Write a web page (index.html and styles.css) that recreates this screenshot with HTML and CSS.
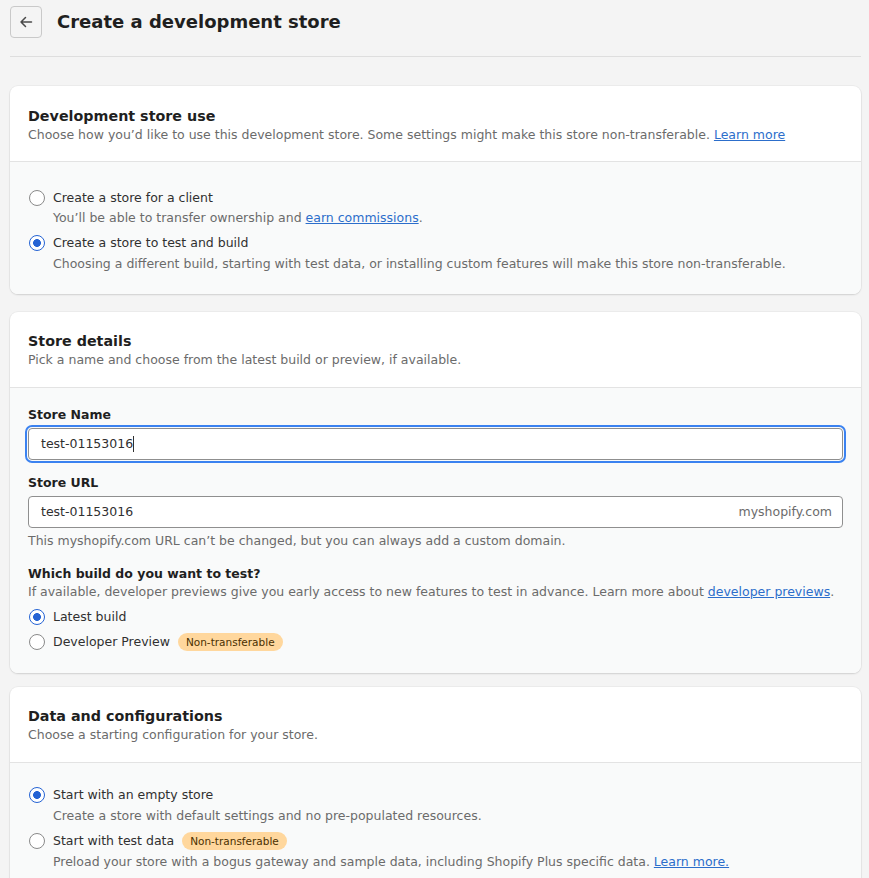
FILE: index.html
```html
<!DOCTYPE html>
<html lang="en">
<head>
<meta charset="utf-8">
<title>Create a development store</title>
<link rel="stylesheet" href="styles.css">
</head>
<body>
<div class="page">
  <header class="page-header">
    <button class="back-btn" aria-label="Back">
      <svg width="16" height="16" viewBox="0 0 16 16"><path d="M13.5 8H3M7.5 3.5L3 8l4.5 4.5" fill="none" stroke="#4a4a4a" stroke-width="1.5" stroke-linecap="round" stroke-linejoin="round"/></svg>
    </button>
    <h1 class="page-title">Create a development store</h1>
  </header>
  <hr class="divider">

  <section class="card card-use">
    <div class="card-head">
      <h2 class="card-title">Development store use</h2>
      <p class="card-sub">Choose how you’d like to use this development store. Some settings might make this store non-transferable. <a href="#">Learn more</a></p>
    </div>
    <div class="card-body body-radios b1">
      <label class="radio-row">
        <span class="radio"></span>
        <span class="radio-label">Create a store for a client</span>
      </label>
      <p class="radio-help">You’ll be able to transfer ownership and <a href="#">earn commissions</a>.</p>
      <label class="radio-row">
        <span class="radio checked"></span>
        <span class="radio-label">Create a store to test and build</span>
      </label>
      <p class="radio-help">Choosing a different build, starting with test data, or installing custom features will make this store non-transferable.</p>
    </div>
  </section>

  <section class="card card-details">
    <div class="card-head">
      <h2 class="card-title">Store details</h2>
      <p class="card-sub">Pick a name and choose from the latest build or preview, if available.</p>
    </div>
    <div class="card-body body-form">
      <div class="field">
        <div class="field-label">Store Name</div>
        <div class="input focused"><span class="input-text">test-01153016</span><span class="caret"></span></div>
      </div>
      <div class="field">
        <div class="field-label">Store URL</div>
        <div class="input"><span class="input-text">test-01153016</span><span class="suffix">myshopify.com</span></div>
        <p class="field-help">This myshopify.com URL can’t be changed, but you can always add a custom domain.</p>
      </div>
      <div class="field build">
        <div class="field-label">Which build do you want to test?</div>
        <p class="field-help top">If available, developer previews give you early access to new features to test in advance. Learn more about <a href="#">developer previews</a>.</p>
        <label class="radio-row compact">
          <span class="radio checked"></span>
          <span class="radio-label">Latest build</span>
        </label>
        <label class="radio-row compact">
          <span class="radio"></span>
          <span class="radio-label">Developer Preview</span>
          <span class="badge">Non-transferable</span>
        </label>
      </div>
    </div>
  </section>

  <section class="card card-data">
    <div class="card-head">
      <h2 class="card-title">Data and configurations</h2>
      <p class="card-sub">Choose a starting configuration for your store.</p>
    </div>
    <div class="card-body body-radios b3">
      <label class="radio-row">
        <span class="radio checked"></span>
        <span class="radio-label">Start with an empty store</span>
      </label>
      <p class="radio-help">Create a store with default settings and no pre-populated resources.</p>
      <label class="radio-row">
        <span class="radio"></span>
        <span class="radio-label">Start with test data</span>
        <span class="badge">Non-transferable</span>
      </label>
      <p class="radio-help">Preload your store with a bogus gateway and sample data, including Shopify Plus specific data. <a href="#">Learn more.</a></p>
    </div>
  </section>
</div>
</body>
</html>
```

FILE: styles.css
```css
* { box-sizing: border-box; }
html, body { margin: 0; padding: 0; }
body {
  background: #f4f4f4;
  font-family: "DejaVu Sans", sans-serif;
  color: #303030;
  font-size: 12.5px;
}
.page {
  padding: 6px 8px 0 10px;
}
.page-header {
  display: flex;
  align-items: center;
  gap: 15px;
  height: 32px;
}
.back-btn {
  width: 32px;
  height: 32px;
  border: 1px solid #c9c9c9;
  border-radius: 4px;
  background: #f4f4f4;
  display: flex;
  align-items: center;
  justify-content: center;
  padding: 0;
}
.page-title {
  margin: 0;
  font-size: 18px;
  font-weight: bold;
  color: #1f1f1f;
  line-height: 24px;
  margin-top: -1px;
}
.divider {
  border: 0;
  border-top: 1px solid #dedede;
  margin: 18px 0 29px 0;
}
.card {
  background: #fff;
  border-radius: 8px;
  box-shadow: 0 1px 2px rgba(0,0,0,0.12), 0 0 0 1px rgba(0,0,0,0.03);
  overflow: hidden;
}
.card-use { margin-bottom: 18px; }
.card-details { margin-bottom: 14px; }
.card-head {
  padding: 19px 18px 18px 18px;
  border-bottom: 1px solid #e3e3e3;
}
.card-use .card-head { padding-top: 20px; padding-bottom: 17px; }
.card-title {
  margin: 0;
  font-size: 14.3px;
  font-weight: bold;
  line-height: 20px;
  color: #1f1f1f;
}
.card-sub {
  margin: 0;
  line-height: 18px;
  color: #6b6b6b;
}
a { color: #2c6ecb; text-decoration: underline; }
.card-body {
  background: #f9fafa;
  padding: 0 18px;
}
.body-radios { padding-top: 26px; padding-bottom: 21px; }
.b3 { padding-top: 22px; }
.radio-row {
  display: flex;
  align-items: center;
  gap: 8px;
  line-height: 20px;
  height: 20px;
}
.radio {
  width: 16px;
  height: 16px;
  margin-left: 1px;
  border-radius: 50%;
  border: 1px solid #8a8a8a;
  background: #fff;
  flex: none;
}
.radio.checked {
  border: 1.5px solid #2563d4;
  background: radial-gradient(circle, #2563d4 0 3.6px, #fff 4.2px);
}
.radio-label { color: #303030; }
.radio-help {
  margin: 1px 0 6px 25px;
  line-height: 18px;
  color: #6b6b6b;
}
.radio-help:last-child { margin-bottom: 0; margin-top: 2px; }
.b3 .radio-help { margin-top: 2px; margin-bottom: 6px; }
.b3 .radio-help:last-child { margin-bottom: 0; }
.badge {
  display: inline-block;
  background: #ffd79d;
  color: #4a3000;
  border-radius: 9px;
  font-size: 10.5px;
  line-height: 18px;
  padding: 0 8px;
}
.body-form { padding-top: 17px; padding-bottom: 21px; }
.field + .field { margin-top: 13px; }
.field-label {
  font-weight: bold;
  line-height: 20px;
  color: #1f1f1f;
  margin-bottom: 3px;
}
.input {
  height: 32px;
  background: #fff;
  border: 1px solid #8f8f8f;
  border-radius: 4px;
  display: flex;
  align-items: center;
  padding: 0 10px 0 12px;
  line-height: 20px;
}
.input.focused {
  outline: 2px solid #3b82f0;
  outline-offset: 1px;
}
.input-text { color: #303030; }
.caret {
  width: 1px;
  height: 16px;
  background: #303030;
}
.suffix {
  margin-left: auto;
  color: #6b6b6b;
}
.field-help {
  margin: 4px 0 0 0;
  line-height: 18px;
  color: #6b6b6b;
}
.field.build { margin-top: 14px; }
.field.build .field-label { margin-bottom: -1px; }
.field-help.top { margin: 0 0 6px 0; }
.radio-row.compact + .radio-row.compact { margin-top: 5px; }
```
